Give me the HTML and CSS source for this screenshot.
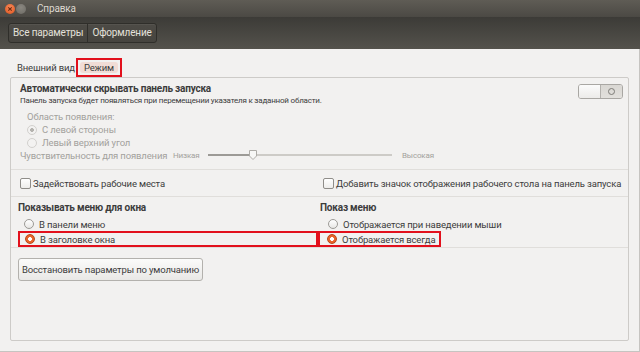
FILE: index.html
```html
<!DOCTYPE html>
<html lang="ru">
<head>
    <meta charset="UTF-8">
    <title>Справка</title>
    <link rel="stylesheet" href="styles.css">
</head>
<body>
    <div class="window">
        <div class="titlebar">
            <span class="wbtn close">
                <svg width="10" height="10" viewBox="0 0 10 10"><path d="M3.3 3.3 L6.7 6.7 M6.7 3.3 L3.3 6.7" stroke="#6a2a10" stroke-width="1.1"/></svg>
            </span>
            <span class="wbtn minimize"></span>
            <span class="title">Справка</span>
        </div>

        <div class="toolbar">
            <div class="seg">
                <span>Все параметры</span>
                <span>Оформление</span>
            </div>
        </div>

        <div class="content">
            <div class="tabs">
                <span class="tab">Внешний вид</span>
                <span class="tab active"><span class="tab-label">Режим</span></span>
            </div>

            <div class="frame">
                <div class="autohide">
                    <div class="ah-head">
                        <div>
                            <div class="ah-title">Автоматически скрывать панель запуска</div>
                            <div class="ah-sub">Панель запуска будет появляться при перемещении указателя к заданной области.</div>
                        </div>
                        <div class="switch">
                            <span class="switch-knob"></span>
                            <span class="switch-off"><i></i></span>
                        </div>
                    </div>

                    <div class="area">
                        <div class="area-label">Область появления:</div>
                        <div class="option dim"><span class="radio disabled on"></span>С левой стороны</div>
                        <div class="option dim"><span class="radio disabled"></span>Левый верхний угол</div>
                    </div>

                    <div class="sensitivity">
                        <span class="sens-label">Чувствительность для появления</span>
                        <span class="sens-end">Низкая</span>
                        <svg class="slider" width="184" height="12" viewBox="0 0 184 12">
                            <rect x="0" y="5" width="45" height="2" fill="#9c9a96"/>
                            <rect x="45" y="5" width="139" height="2" fill="#cdcbc7"/>
                            <path d="M41.5 1.5 h7 v5.5 l-3.5 3.5 l-3.5 -3.5 z" fill="#f7f7f6" stroke="#aeaca8"/>
                        </svg>
                        <span class="sens-end high">Высокая</span>
                    </div>
                </div>

                <div class="checks">
                    <label class="check-item"><span class="checkbox"></span>Задействовать рабочие места</label>
                    <label class="check-item"><span class="checkbox"></span>Добавить значок отображения рабочего стола на панель запуска</label>
                </div>

                <div class="menus">
                    <div class="menu-col">
                        <div class="menu-title">Показывать меню для окна</div>
                        <div class="option"><span class="radio"></span>В панели меню</div>
                        <div class="option marked"><span class="radio on"></span>В заголовке окна</div>
                    </div>
                    <div class="menu-col right">
                        <div class="menu-title">Показ меню</div>
                        <div class="option"><span class="radio"></span>Отображается при наведении мыши</div>
                        <div class="option marked short"><span class="radio on"></span>Отображается всегда</div>
                    </div>
                </div>

                <div class="reset">
                    <button class="reset-button">Восстановить параметры по умолчанию</button>
                </div>
            </div>
        </div>
    </div>
</body>
</html>
```

FILE: styles.css
```css
body {
    margin: 0;
    font-family: Roboto, "Noto Sans", sans-serif;
    font-size: 9.5px;
    letter-spacing: -0.15px;
    color: #3c3c3c;
    white-space: nowrap;
}

.window {
    width: 640px;
    height: 352px;
    display: flex;
    flex-direction: column;
    background-color: #f2f1f0;
    overflow: hidden;
}

/* Title bar */
.titlebar {
    height: 17px;
    display: flex;
    align-items: center;
    padding-left: 5px;
    background: linear-gradient(#5f5c55, #4b4944);
}

.wbtn {
    width: 10px;
    height: 10px;
    border-radius: 50%;
    margin-right: 1px;
    display: flex;
}

.close {
    background: radial-gradient(circle at 50% 35%, #f58a5b, #e0521a);
}

.minimize {
    background: radial-gradient(circle at 50% 35%, #8a8780, #6c6a64);
}

.title {
    margin-left: 10px;
    color: #dcd8cf;
    font-size: 10px;
}

/* Toolbar */
.toolbar {
    height: 32px;
    box-sizing: border-box;
    padding: 6px 0 0 8px;
    background: linear-gradient(#3c3b37, #54524c);
}

.seg {
    display: inline-flex;
    height: 20px;
    box-sizing: border-box;
    border: 1px solid #2f2e2a;
    border-radius: 3px;
    background: linear-gradient(#4d4b46, #46443f);
    box-shadow: inset 0 1px rgba(255, 255, 255, 0.05);
}

.seg span {
    padding: 0 4px;
    line-height: 18px;
    font-size: 10px;
    color: #e4e1db;
}

.seg span + span {
    border-left: 1px solid #302f2b;
}

/* Content */
.content {
    flex: 1;
    display: flex;
    flex-direction: column;
    padding: 9px 10px 10px 10px;
    border-right: 1px solid #c6c4c1;
    border-bottom: 1px solid #c6c4c1;
}

.tabs {
    height: 19px;
    display: flex;
    align-items: center;
}

.tab {
    padding: 0 1px 0 7px;
}

.tab.active {
    height: 19px;
    box-sizing: border-box;
    padding: 2px;
    border: 2px solid #e2101c;
    display: flex;
}

.tab-label {
    padding: 0 4px;
    line-height: 11px;
    border-radius: 3px;
    background-color: #f1dcd5;
}

.frame {
    flex: 1;
    border: 1px solid #cdcbc8;
    border-radius: 2px;
}

/* Auto hide */
.autohide {
    padding: 4px 5px 8px 9px;
    border-bottom: 1px solid #e0dedb;
}

.ah-head {
    display: flex;
    justify-content: space-between;
}

.ah-title {
    font-size: 10px;
    font-weight: bold;
    letter-spacing: -0.2px;
    line-height: 14px;
}

.ah-sub {
    font-size: 8px;
    letter-spacing: -0.2px;
    line-height: 9px;
}

.switch {
    margin-top: 2px;
    width: 45px;
    height: 15px;
    box-sizing: border-box;
    display: flex;
    border: 1px solid #a9a7a3;
    border-radius: 3px;
    overflow: hidden;
}

.switch-knob {
    width: 21px;
    background: linear-gradient(#fbfbfb, #ecebe9);
    border-right: 1px solid #b3b1ad;
}

.switch-off {
    flex: 1;
    display: flex;
    align-items: center;
    justify-content: center;
    background: linear-gradient(#d9d7d3, #e2e0dc);
}

.switch-off i {
    width: 7px;
    height: 7px;
    box-sizing: border-box;
    border: 1px solid #7d7b77;
    border-radius: 50%;
}

.area {
    margin-top: 6px;
    padding-left: 7px;
}

.area-label {
    line-height: 12px;
    color: #a3a19d;
}

.option {
    display: flex;
    align-items: center;
    height: 13px;
}

.option.dim {
    color: #a3a19d;
}

.radio {
    width: 10px;
    height: 10px;
    box-sizing: border-box;
    margin-right: 5px;
    border-radius: 50%;
    border: 1px solid #9c9a96;
    background: linear-gradient(#ffffff, #e8e7e5);
}

.radio.on {
    border-color: #b8471a;
    background: radial-gradient(circle, #ffffff 0 1.6px, #e8632a 2.2px);
}

.radio.disabled {
    border-color: #d2d0cd;
    background: #f3f2f1;
}

.radio.disabled.on {
    background: radial-gradient(circle, #b5b3af 0 1.6px, #f3f2f1 2.2px);
}

.sensitivity {
    display: flex;
    align-items: center;
    height: 12px;
    color: #a3a19d;
}

.sens-label {
    width: 153px;
}

.sens-end {
    width: 35px;
    font-size: 8px;
}

.sens-end.high {
    margin-left: 10px;
}

/* Checkboxes */
.checks {
    height: 26px;
    display: grid;
    grid-template-columns: 303px 1fr;
    align-items: center;
    padding-left: 9px;
    border-bottom: 1px solid #e0dedb;
}

.check-item {
    display: flex;
    align-items: center;
}

.checkbox {
    width: 11px;
    height: 11px;
    box-sizing: border-box;
    margin-right: 2px;
    border: 1px solid #8f8d89;
    border-radius: 2px;
    background: linear-gradient(#ffffff, #eeedeb);
}

/* Window menus */
.menus {
    display: grid;
    grid-template-columns: 302px 1fr;
    padding: 4px 0 0 7px;
    border-bottom: 1px solid #e0dedb;
}

.menu-title {
    font-size: 10px;
    font-weight: bold;
    letter-spacing: -0.2px;
    line-height: 14px;
    margin-bottom: 2px;
}

.menu-col .option {
    height: 14px;
    padding-left: 6px;
}

.menu-col.right .option {
    padding-left: 8px;
}

.menu-col .option.marked {
    height: 16px;
    box-sizing: border-box;
    padding-left: 5px;
    border: 2px solid #e2101c;
}

.menu-col.right .option.marked {
    width: 125px;
    margin-left: -4px;
    padding-left: 9px;
}

.reset {
    padding: 10px 0 0 7px;
}

.reset-button {
    height: 23px;
    width: 185px;
    padding: 0;
    font-family: inherit;
    font-size: 9.5px;
    letter-spacing: -0.15px;
    color: #3c3c3c;
    border: 1px solid #b3b1ad;
    border-radius: 3px;
    background: linear-gradient(#fbfbfa, #e9e8e6);
}
```
